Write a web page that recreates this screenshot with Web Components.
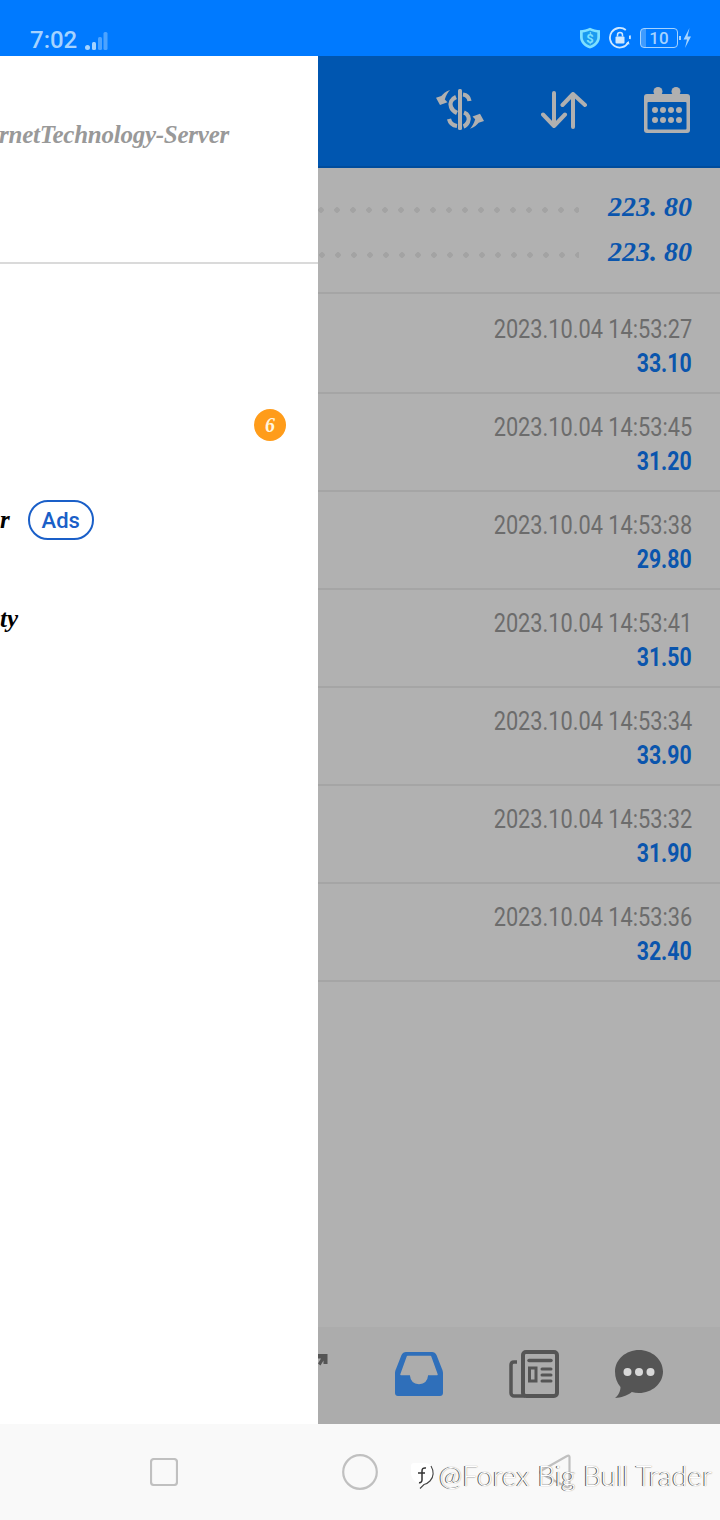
<!DOCTYPE html>
<html>
<head>
<meta charset="utf-8">
<title>Trade history</title>
<style>
html, body { margin: 0; padding: 0; }
body { width: 720px; height: 1520px; overflow: hidden; font-family: Roboto, "Liberation Sans", sans-serif; }
</style>
</head>
<body>
<phone-screen>
    <status-bar slot="status"></status-bar>
    <side-drawer slot="drawer">
        <drawer-item><ad-pill slot="extra">Ads</ad-pill></drawer-item>
    </side-drawer>
    <app-toolbar slot="toolbar"></app-toolbar>
    <balance-row slot="list" value="223. 80"></balance-row>
    <balance-row slot="list" value="223. 80" shift="1" end></balance-row>
    <trade-row slot="list" first time="2023.10.04 14:53:27" price="33.10"></trade-row>
    <trade-row slot="list" time="2023.10.04 14:53:45" price="31.20"></trade-row>
    <trade-row slot="list" time="2023.10.04 14:53:38" price="29.80"></trade-row>
    <trade-row slot="list" time="2023.10.04 14:53:41" price="31.50"></trade-row>
    <trade-row slot="list" time="2023.10.04 14:53:34" price="33.90"></trade-row>
    <trade-row slot="list" time="2023.10.04 14:53:32" price="31.90"></trade-row>
    <trade-row slot="list" time="2023.10.04 14:53:36" price="32.40"></trade-row>
    <tab-bar slot="tabs"></tab-bar>
    <nav-bar slot="nav"></nav-bar>
</phone-screen>

<script>
class PhoneScreen extends HTMLElement {
    constructor() {
        super();
        this.attachShadow({mode: 'open'}).innerHTML = `
        <style>
        :host { display: flex; flex-direction: column; width: 720px; height: 1520px; overflow: hidden; }
        .main { display: flex; height: 1368px; }
        .panel { width: 402px; display: flex; flex-direction: column; background: #b1b1b1; }
        .list { flex: 1; display: flex; flex-direction: column; padding-top: 16px; }
        </style>
        <slot name="status"></slot>
        <div class="main">
            <slot name="drawer"></slot>
            <div class="panel">
                <slot name="toolbar"></slot>
                <div class="list"><slot name="list"></slot></div>
                <slot name="tabs"></slot>
            </div>
        </div>
        <slot name="nav"></slot>
        `;
    }
}

class StatusBar extends HTMLElement {
    constructor() {
        super();
        this.attachShadow({mode: 'open'}).innerHTML = `
        <style>
        :host { display: flex; align-items: center; height: 56px; background: #007aff; padding: 23px 28px 0 30px; box-sizing: border-box; color: #a5d3ff; }
        .time { font: 500 24px/32px Roboto, sans-serif; }
        .signal { margin-left: 8px; margin-top: 3px; }
        .right { margin-left: auto; display: flex; align-items: center; margin-top: -3px; }
        .batt { width: 36px; height: 18px; margin-left: 9px; border: 1.5px solid #a5d3ff; border-radius: 4px; display: flex; align-items: center; justify-content: center; font: 500 17px/18px Roboto, sans-serif; background: linear-gradient(90deg, #3f9cff 0 5px, transparent 5px); }
        </style>
        <span class="time">7:02</span>
        <svg class="signal" width="24" height="20" viewBox="0 0 24 20">
            <circle cx="2.500" cy="16.500" r="2.500" fill="#a5d3ff"/>
            <rect x="7" y="11" width="4" height="8" rx="1.500" fill="#a5d3ff"/>
            <rect x="13" y="6" width="4" height="13" rx="1.500" fill="#4da3ff"/>
            <rect x="18.500" y="1" width="4" height="18" rx="1.500" fill="#4da3ff"/>
        </svg>
        <div class="right">
            <svg width="22" height="22" viewBox="0 0 22 22">
                <path d="M11 0.800C14 2.300 17.500 3 21 3.200V10C21 15.500 17 19.500 11 21.500C5 19.500 1 15.500 1 10V3.200C4.500 3 8 2.300 11 .8Z" fill="#7ee0ff"/>
                <path d="M11 3.600C13.500 4.700 16 5.300 18.300 5.500V10C18.300 14 15.500 17 11 18.700C6.500 17 3.700 14 3.700 10V5.500C6 5.300 8.500 4.700 11 3.600Z" fill="#1b9bf0"/>
                <text x="11" y="15.500" text-anchor="middle" font-family="Roboto, sans-serif" font-weight="700" font-size="13" fill="#7ee0ff">$</text>
            </svg>
            <svg width="22" height="22" viewBox="0 0 22 22" style="margin-left:8px">
                <path d="M19.300 15.500A9.800 9.800 0 1 1 16.800 3" fill="none" stroke="#cfe8ff" stroke-width="1.800"/>
                <path d="M20.800 8.500A9.800 9.800 0 0 1 20.800 12" fill="none" stroke="#cfe8ff" stroke-width="1.800"/>
                <path d="M20.500 17.500l-3.600-1 2.800-2.600z" fill="#cfe8ff"/>
                <rect x="6.500" y="9.500" width="9" height="7" rx="1" fill="#cfe8ff"/>
                <path d="M8.500 9.500V8a2.500 2.500 0 0 1 5 0v1.500" fill="none" stroke="#cfe8ff" stroke-width="1.500"/>
            </svg>
            <span class="batt">10</span>
            <svg width="13" height="22" viewBox="0 0 13 22" style="margin-left:1px">
                <rect x="0" y="9" width="2" height="4" fill="#a5d3ff"/>
                <path d="M10.500 1L4.500 12.500h3.500l-2 8.500L12 9.500H8.500z" fill="#a5d3ff"/>
            </svg>
        </div>
        `;
    }
}

class SideDrawer extends HTMLElement {
    constructor() {
        super();
        this.attachShadow({mode: 'open'}).innerHTML = `
        <style>
        :host { display: flex; flex-direction: column; flex: none; width: 318px; background: #fff; overflow: hidden; }
        .server { height: 208px; box-sizing: border-box; border-bottom: 2px solid #dadada; display: flex; justify-content: flex-end; padding: 63px 89px 0 0; white-space: nowrap; font: italic 700 25px/32px "Liberation Serif", serif; letter-spacing: -.25px; color: #999; }
        .rows { display: flex; flex-direction: column; padding-top: 145px; }
        .badge-row { height: 91px; display: flex; justify-content: flex-end; align-items: flex-start; padding-right: 32px; }
        .badge { width: 32px; height: 32px; border-radius: 50%; background: #ff9c1a; color: #fff6e0; display: flex; align-items: center; justify-content: center; font: italic 700 20px/32px "Liberation Serif", serif; }
        .last { margin-top: 63px; font: italic 700 25px/32px "Liberation Serif", serif; color: #000; white-space: nowrap; }
        </style>
        <div class="server"><span>rnetTechnology-Server</span></div>
        <div class="rows">
            <div class="badge-row"><span class="badge">6</span></div>
            <slot></slot>
            <div class="last"><span>ty</span></div>
        </div>
        `;
    }
}

class DrawerItem extends HTMLElement {
    constructor() {
        super();
        this.attachShadow({mode: 'open'}).innerHTML = `
        <style>
        :host { display: flex; align-items: center; height: 40px; }
        .label { font: italic 700 25px/32px "Liberation Serif", serif; color: #000; white-space: nowrap; }
        </style>
        <span class="label">r</span><slot name="extra"></slot>
        `;
    }
}

class AdPill extends HTMLElement {
    constructor() {
        super();
        this.attachShadow({mode: 'open'}).innerHTML = `
        <style>
        :host { display: flex; align-items: center; justify-content: center; box-sizing: border-box; width: 66px; height: 40px; margin-left: 18px; padding-top: 2px; border: 2px solid #1a5fc8; border-radius: 20px; color: #1a5fc8; font: 500 22px/26px Roboto, sans-serif; }
        </style>
        <slot></slot>
        `;
    }
}

class AppToolbar extends HTMLElement {
    constructor() {
        super();
        this.attachShadow({mode: 'open'}).innerHTML = `
        <style>
        :host { display: flex; align-items: center; justify-content: flex-end; box-sizing: border-box; height: 112px; padding: 0 30px 2px 0; background: #0056b0; border-bottom: 2px solid #004c9c; }
        svg { display: block; flex: none; }
        </style>
        <svg width="50" height="44" viewBox="0 0 50 44" style="margin-right:55px">
            <rect x="22" y="1" width="4" height="41" rx="1.500" fill="#b0b0b0"/>
            <g fill="none" stroke="#b0b0b0" stroke-width="4.200">
                <path d="M27 6.500C31 7 33 10 33.500 13"/>
                <path d="M20 9C15.500 11 13.500 15 15 19C16 22 19 24 21 25"/>
                <path d="M28 24.500C32 26 34 30 32 34C31 36 29 38 27.500 38.500"/>
                <path d="M13 31C14 35 17 37.500 21 38"/>
            </g>
            <g fill="#b0b0b0">
                <path d="M4 17L11.500 14.300 8.800 11.500C10 7.500 12 4 14 2C9.500 3.500 7 6 5.300 8L0 9.700Z"/>
                <path d="M44 25.700L36.500 28.400 39.200 31.200C38 35.200 36 38.700 34 40.700C38.500 39.200 41 36.700 42.700 34.700L48 33Z"/>
            </g>
        </svg>
        <svg width="46" height="38" viewBox="0 0 46 38" fill="none" stroke="#b0b0b0" stroke-width="4" stroke-linecap="round" stroke-linejoin="round" style="margin-right:57px">
            <path d="M13 2V35M2 23.500L13 35 24 23.500"/>
            <path d="M32 36V3M21.500 14L32 3 44 14"/>
        </svg>
        <svg width="46" height="46" viewBox="0 0 46 46">
            <path d="M3 7H43A3 3 0 0 1 46 10V43A3 3 0 0 1 43 46H3A3 3 0 0 1 0 43V10A3 3 0 0 1 3 7Z" fill="#b0b0b0"/>
            <circle cx="14" cy="4.500" r="4.500" fill="#b0b0b0"/><circle cx="32" cy="4.500" r="4.500" fill="#b0b0b0"/>
            <rect x="3.500" y="15" width="39" height="27.500" rx="1" fill="#0056b0"/>
            <g fill="#b0b0b0">
                <circle cx="11" cy="23" r="3"/><circle cx="19" cy="23" r="3"/><circle cx="27" cy="23" r="3"/><circle cx="35" cy="23" r="3"/>
                <circle cx="11" cy="33" r="3"/><circle cx="19" cy="33" r="3"/><circle cx="27" cy="33" r="3"/><circle cx="35" cy="33" r="3"/>
            </g>
        </svg>
        `;
    }
}

class BalanceRow extends HTMLElement {
    constructor() {
        super();
        const shift = Number(this.getAttribute('shift') || 0);
        this.attachShadow({mode: 'open'}).innerHTML = `
        <style>
        :host { display: flex; align-items: center; height: 45px; padding-right: 28px; }
        :host([end]) { height: 65px; box-sizing: border-box; padding-bottom: 18px; border-bottom: 2px solid #a5a5a5; }
        .dots { flex: 1; height: 6px; margin-top: 7px; margin-right: 29px; background: radial-gradient(circle at 3px 3px, #a3a3a3 2.500px, transparent 3px) ${shift}px 0 / 16px 6px repeat-x; }
        .value { font: italic 700 28px/34px "Liberation Serif", serif; color: #0a55ad; white-space: pre; }
        </style>
        <div class="dots"></div>
        <span class="value">${this.getAttribute('value')}</span>
        `;
    }
}

class TradeRow extends HTMLElement {
    constructor() {
        super();
        this.attachShadow({mode: 'open'}).innerHTML = `
        <style>
        :host { display: flex; flex-direction: column; align-items: flex-end; box-sizing: border-box; height: 98px; padding: 19px 28px 0 0; border-bottom: 2px solid #a5a5a5; }
        :host([first]) { height: 100px; padding-top: 21px; }
        span { display: block; transform-origin: right center; white-space: nowrap; }
        .time { font: 400 25px/30px Roboto, sans-serif; color: #6c6c6c; transform: scaleX(.87); }
        .price { margin-top: 4px; font: 700 25px/30px Roboto, sans-serif; color: #0a55ad; transform: scaleX(.85); }
        </style>
        <span class="time">${this.getAttribute('time')}</span>
        <span class="price">${this.getAttribute('price')}</span>
        `;
    }
}

class TabBar extends HTMLElement {
    constructor() {
        super();
        this.attachShadow({mode: 'open'}).innerHTML = `
        <style>
        :host { display: flex; align-items: center; box-sizing: border-box; height: 97px; padding: 0 57px 3px 0; background: #acacac; }
        svg { display: block; flex: none; }
        </style>
        <svg width="10" height="14" viewBox="0 0 10 14" style="margin-right:auto;margin-bottom:26px" fill="#555">
            <path d="M0 0H9.500V10H5.500V6.500L2.500 11.500 0 9.500 3 4.500H0Z"/>
        </svg>
        <svg width="48" height="44" viewBox="0 0 48 44" style="margin-right:66px">
            <path d="M11 0H37C39 0 40.500 1 41.500 3L47 17C47.700 18.500 48 20 48 21V41C48 42.700 46.700 44 45 44H3C1.300 44 0 42.700 0 41V21C0 20 .3 18.500 1 17L6.500 3C7.500 1 9 0 11 0Z" fill="#2f6fba"/>
            <path d="M12.500 4.500H35.500L42 22.500H32.500C32 28 29 31.500 24 31.500S16 28 15.500 22.500H6Z" fill="#acacac" stroke="#acacac" stroke-width="1.500" stroke-linejoin="round"/>
        </svg>
        <svg width="50" height="48" viewBox="0 0 50 48" fill="none" stroke="#555" style="margin-right:56px">
            <path d="M8 12H5C3 12 2 13 2 15V43C2 45 3.500 46 5 46H16" stroke-width="3.500"/>
            <rect x="14" y="2" width="34" height="44" rx="3" stroke-width="4"/>
            <path d="M20 10.500H42" stroke-width="3.500" stroke-linecap="round"/>
            <rect x="20.500" y="18" width="6.500" height="13" stroke-width="3"/>
            <path d="M33 19H42M33 25H42M33 31H42" stroke-width="3" stroke-linecap="round"/>
        </svg>
        <svg width="48" height="48" viewBox="0 0 48 48">
            <path d="M24 0C37 0 48 9.500 48 21.500S37 43 24 43C21.500 43 19 42.600 16.800 42C12 46 6 47.500 0 48C3.500 45.500 5.500 41 5.500 37C2 33 0 27.500 0 21.500 0 9.500 11 0 24 0Z" fill="#555"/>
            <circle cx="12.500" cy="22" r="4" fill="#d8d8d8"/><circle cx="24" cy="22" r="4" fill="#d8d8d8"/><circle cx="35.500" cy="22" r="4" fill="#d8d8d8"/>
        </svg>
        `;
    }
}

class NavBar extends HTMLElement {
    constructor() {
        super();
        this.attachShadow({mode: 'open'}).innerHTML = `
        <style>
        :host { display: flex; align-items: center; position: relative; box-sizing: border-box; height: 96px; padding-left: 150px; background: #f9f9f9; }
        svg { display: block; flex: none; }
        .mark { position: absolute; left: 411px; top: 33px; display: flex; align-items: center; white-space: nowrap; font: 300 28px/36px Lato, sans-serif; letter-spacing: .1px; color: #fff; text-shadow: -1px 0 0 #555, 0 0 1px #777; }
        .mark svg { margin-right: 4px; }
        </style>
        <svg width="28" height="28" viewBox="0 0 28 28" style="margin-right:164px">
            <rect x="1" y="1" width="26" height="26" rx="3" fill="none" stroke="#c0c0c0" stroke-width="2.200"/>
        </svg>
        <svg width="36" height="36" viewBox="0 0 36 36" style="margin-right:160px">
            <circle cx="18" cy="18" r="16.800" fill="none" stroke="#c0c0c0" stroke-width="2.200"/>
        </svg>
        <svg width="34" height="36" viewBox="0 0 34 36">
            <path d="M29 2C30.500 1 31.500 1.800 31.500 3V31C31.500 33 30 33.800 28.500 33L3.500 20C1.500 19 1.500 17.500 3.500 16.500Z" fill="none" stroke="#c0c0c0" stroke-width="2.200"/>
        </svg>
        <div class="mark">
            <svg width="24" height="30" viewBox="0 0 24 30">
                <path d="M3 3H14C19 3 23 7 23 13C23 19 19 23 14 24L9 29 9.500 24C5 23 0 19 0 13V6C0 4 1 3 3 3Z" fill="#fff"/>
                <path d="M20 6C23 11 23 17 19 21C17 23 15 24 13 24.500L9 28.500" fill="none" stroke="#444" stroke-width="1.100"/>
                <path d="M15 8C12 7.500 11 9 11 11V20C11 22 9.500 23 8 22.500M7 13H14" fill="none" stroke="#333" stroke-width="1.500"/>
            </svg>
            <span>@Forex Big Bull Trader</span>
        </div>
        `;
    }
}

customElements.define('phone-screen', PhoneScreen);
customElements.define('status-bar', StatusBar);
customElements.define('side-drawer', SideDrawer);
customElements.define('drawer-item', DrawerItem);
customElements.define('ad-pill', AdPill);
customElements.define('app-toolbar', AppToolbar);
customElements.define('balance-row', BalanceRow);
customElements.define('trade-row', TradeRow);
customElements.define('tab-bar', TabBar);
customElements.define('nav-bar', NavBar);
</script>
</body>
</html>
